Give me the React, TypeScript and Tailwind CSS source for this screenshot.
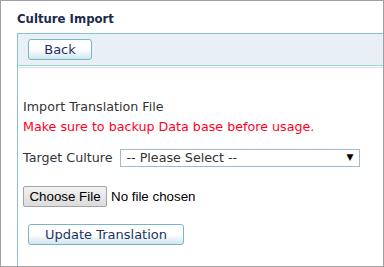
export default function App() {
  return (
    <div className="w-[384px] h-[267px] bg-white border border-[#a0a0a0] flex flex-col font-['DejaVu_Sans',sans-serif] text-[12.7px] text-[#333]">
      <h1 className="px-[16px] pt-[11px] pb-[7px] font-bold text-[13px] leading-[14px] text-[#1d2b4c] font-['DejaVu_Sans_Condensed','DejaVu_Sans',sans-serif]">
        Culture Import
      </h1>

      <div className="ml-[16px] flex-1 border-l border-t border-[#86c4cc] flex flex-col">
        <div className="h-[32px] bg-[#e8eff5] border-b border-[#9fd0d6] flex items-center pl-[10px]">
          <button className="w-[64px] h-[21px] rounded-[3px] border border-[#76b6c8] bg-gradient-to-b from-white via-white to-[#cfe5ee] text-[#1f3264] text-[13px] leading-none">
            Back
          </button>
        </div>
        <div className="h-[2px] border-b border-[#cde6ea]" />

        <div className="pl-[5px] pt-[29px] flex flex-col">
          <p className="leading-[20px]">Import Translation File</p>
          <p className="leading-[20px] text-[#ff0022]">Make sure to backup Data base before usage.</p>

          <div className="mt-[11px] flex items-center gap-[8px]">
            <span>Target Culture</span>
            <div className="w-[240px] h-[18px] border border-[#a5b9cd] flex items-center justify-between pl-[5px] pr-[6px]">
              <span>-- Please Select --</span>
              <span className="text-[9px] text-black">▼</span>
            </div>
          </div>

          <div className="mt-[19px] flex items-center gap-[4px]">
            <button className="w-[84px] h-[21px] rounded-[2px] border border-[#a3a3a3] bg-gradient-to-b from-[#f2f2f2] to-[#dcdcdc] text-[13.33px] text-black font-['Liberation_Sans',sans-serif] leading-none">
              Choose File
            </button>
            <span className="text-[13.33px] text-black font-['Liberation_Sans',sans-serif]">No file chosen</span>
          </div>

          <div className="mt-[17px] pl-[5px]">
            <button className="w-[156px] h-[21px] rounded-[3px] border border-[#76b6c8] bg-gradient-to-b from-white via-white to-[#cfe5ee] text-[#1f3264] text-[13px] leading-none">
              Update Translation
            </button>
          </div>
        </div>
      </div>
    </div>
  );
}
